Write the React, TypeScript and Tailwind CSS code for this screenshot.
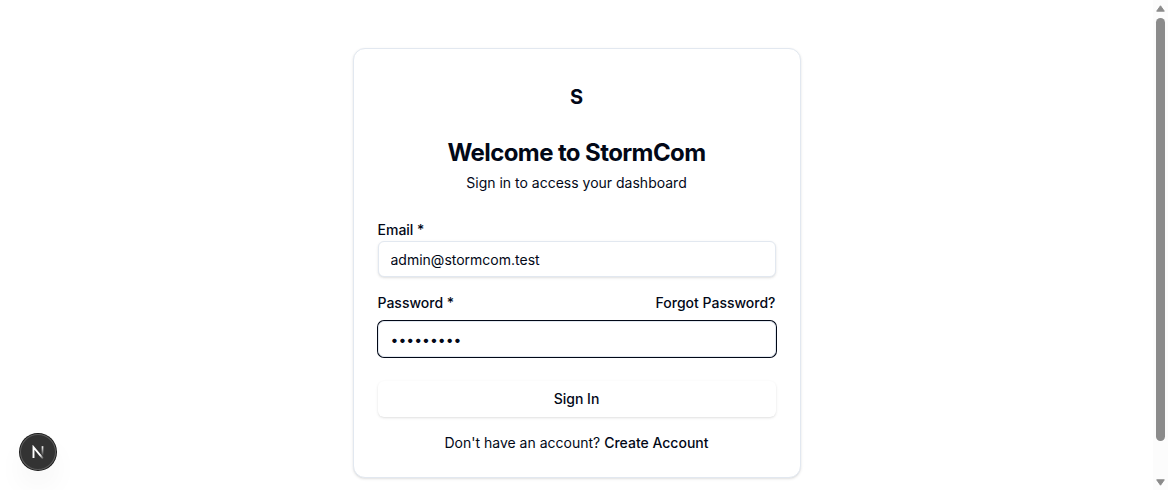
import React from "react";

function Field({ value, type, focused }: { value: string; type: string; focused?: boolean }) {
  return (
    <input
      type={type}
      defaultValue={value}
      className={
        "block h-9 w-full rounded-md border border-slate-200 bg-white px-3 text-sm text-[#020817] outline-none " +
        (focused ? "shadow-[0_0_0_1px_#020817]" : "shadow-sm")
      }
    />
  );
}

function Scrollbar() {
  return (
    <div className="flex h-full w-[15px] shrink-0 flex-col items-center bg-[#fcfcfc]">
      <svg className="mt-[5px] h-[7px] w-[9px] shrink-0" viewBox="0 0 9 7">
        <path d="M4.5 0.8 8.3 6.2H.7Z" fill="#8b8b8b" stroke="#8b8b8b" strokeLinejoin="round" />
      </svg>
      <div className="mt-[6px] h-[423px] w-[9px] shrink-0 rounded-full bg-[#8b8b8b]" />
      <svg className="mt-[38px] h-[7px] w-[9px] shrink-0" viewBox="0 0 9 7">
        <path d="M4.5 6.2.7.8h7.6Z" fill="#8b8b8b" stroke="#8b8b8b" strokeLinejoin="round" />
      </svg>
    </div>
  );
}

function DevBadge() {
  return (
    <div className="absolute bottom-5 left-5 flex size-9 items-center justify-center rounded-full bg-[#333] shadow-[0_0_0_1px_#171717,inset_0_0_0_1px_#5c5c5c,0_16px_32px_-8px_rgba(0,0,0,0.14)]">
      <svg width="14" height="14" viewBox="0 0 14 14" fill="none">
        <defs>
          <linearGradient id="diagonal" x1="9.5" y1="9.5" x2="13" y2="14" gradientUnits="userSpaceOnUse">
            <stop stopColor="#fff" />
            <stop offset="1" stopColor="#fff" stopOpacity="0" />
          </linearGradient>
          <linearGradient id="upright" x1="11" y1="1" x2="11" y2="11" gradientUnits="userSpaceOnUse">
            <stop stopColor="#fff" />
            <stop offset="1" stopColor="#fff" stopOpacity="0" />
          </linearGradient>
        </defs>
        <path d="M2.5 13V2.2L12 13.6" stroke="url(#diagonal)" strokeWidth="1.9" />
        <path d="M11.5 1.2V11" stroke="url(#upright)" strokeWidth="1.7" />
      </svg>
    </div>
  );
}

export default function App() {
  return (
    <div className="relative flex h-[490px] overflow-hidden bg-white font-['Inter',sans-serif] text-sm text-[#020817]">
      <main className="flex flex-1 items-start justify-center pt-12">
        <section className="h-[430px] w-[448px] rounded-xl border border-slate-200 bg-white p-6 shadow-sm">
          <header className="flex flex-col items-center">
            <div className="flex size-12 items-center justify-center text-xl font-bold">S</div>
            <h1 className="mt-4 text-2xl font-bold tracking-tight">Welcome to StormCom</h1>
            <p className="mt-1">Sign in to access your dashboard</p>
          </header>
          <form className="mt-[27px]" onSubmit={(e) => e.preventDefault()}>
            <label className="block font-medium">Email *</label>
            <div className="mt-px">
              <Field type="text" value="admin@stormcom.test" />
            </div>
            <div className="mt-4 mb-2 flex justify-between font-medium">
              <label>Password *</label>
              <a>Forgot Password?</a>
            </div>
            <Field type="password" value="password1" focused />
            <button className="mt-6 flex h-9 w-full items-center justify-center rounded-md bg-white font-medium shadow-sm">
              Sign In
            </button>
          </form>
          <p className="mt-4 text-center">
            Don't have an account? <a className="font-medium">Create Account</a>
          </p>
        </section>
      </main>
      <Scrollbar />
      <DevBadge />
    </div>
  );
}
